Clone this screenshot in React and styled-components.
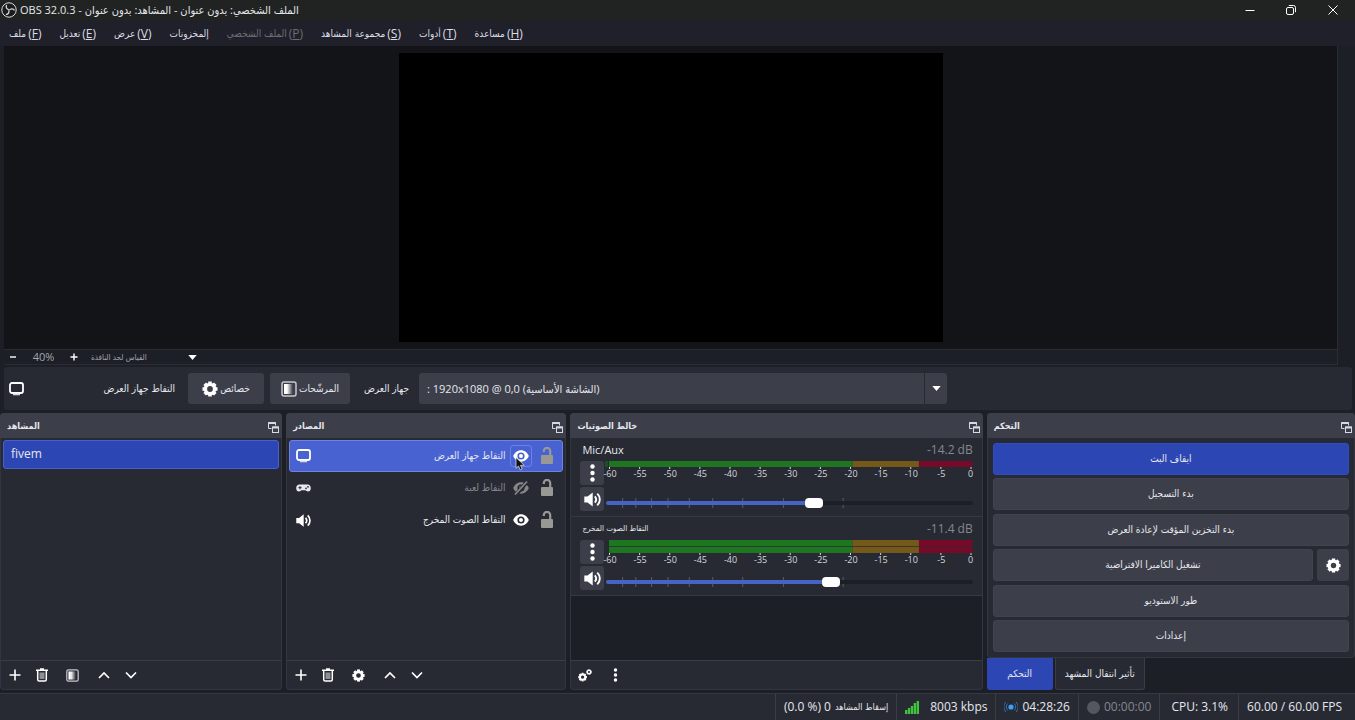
import { Fragment, useState } from "react";
import styled, { createGlobalStyle, css } from "styled-components";

const latin = `"Open Sans", "Noto Sans", "DejaVu Sans Condensed", "DejaVu Sans", sans-serif`;
const arabic = `"DejaVu Sans Condensed", "DejaVu Sans", "Open Sans", sans-serif`;

const MENUS = [
  { text: "ملف", letter: "F" },
  { text: "تعديل", letter: "E" },
  { text: "عرض", letter: "V" },
  { text: "إلمخزونات" },
  { text: "الملف الشخصي", letter: "P", disabled: true },
  { text: "مجموعة المشاهد", letter: "S" },
  { text: "أدوات", letter: "T" },
  { text: "مساعدة", letter: "H" }
];

const SOURCES = [
  { name: "التقاط جهاز العرض", icon: "display", visible: true, selected: true },
  { name: "التقاط لعبة", icon: "gamepad", visible: false },
  { name: "التقاط الصوت المخرج", icon: "speaker", visible: true }
];

export default function App() {
  return (
    <Fragment>
      <GlobalStyle />
      <Window>
        <TitleBar>
          <ObsLogo />
          <Title>OBS 32.0.3 - الملف الشخصي: بدون عنوان - المشاهد: بدون عنوان</Title>
          <WindowButton aria-label="Minimize">
            <Stroke viewBox="0 0 10 10" size={10}>
              <path d="M0.5 5.5h9" />
            </Stroke>
          </WindowButton>
          <WindowButton aria-label="Restore">
            <Stroke viewBox="0 0 10 10" size={10}>
              <rect x="0.5" y="2.5" width="7" height="7" rx="1.5" />
              <path d="M2.8 0.5h4.7a2 2 0 0 1 2 2v4.7" />
            </Stroke>
          </WindowButton>
          <WindowButton aria-label="Close">
            <Stroke viewBox="0 0 10 10" size={10}>
              <path d="M0.5 0.5l9 9M9.5 0.5l-9 9" />
            </Stroke>
          </WindowButton>
        </TitleBar>

        <MenuBar>
          {MENUS.map((menu) => (
            <MenuItem key={menu.text} disabled={menu.disabled}>
              <Ar>{menu.text}</Ar>
              {menu.letter && (
                <span>
                  (<u>{menu.letter}</u>)
                </span>
              )}
            </MenuItem>
          ))}
        </MenuBar>

        <Preview>
          <Stage>
            <Canvas />
          </Stage>
          <ScrollColumn />
        </Preview>
        <ZoomBar>
          <ZoomButton aria-label="Zoom out">
            <Stroke viewBox="0 0 8 8" size={8}>
              <path d="M1 4h6" strokeWidth="1.4" />
            </Stroke>
          </ZoomButton>
          <ZoomValue>40%</ZoomValue>
          <ZoomButton aria-label="Zoom in">
            <Stroke viewBox="0 0 8 8" size={8}>
              <path d="M0.5 4h7M4 0.5v7" strokeWidth="1.4" />
            </Stroke>
          </ZoomButton>
          <ScaleBox>
            <ScaleSelect aria-label="Preview scaling">
              <option>القياس لحد النافذة</option>
            </ScaleSelect>
            <Caret />
          </ScaleBox>
        </ZoomBar>

        <SourceBar>
          <DisplayIcon />
          <SourceName>التقاط جهاز العرض</SourceName>
          <BarButton>
            <GearIcon size={16} />
            <Ar>خصائص</Ar>
          </BarButton>
          <BarButton>
            <FilterIcon size={16} />
            <Ar>المرشّحات</Ar>
          </BarButton>
          <DeviceLabel htmlFor="device">جهاز العرض</DeviceLabel>
          <DeviceBox>
            <DeviceSelect id="device">
              <option>: 1920x1080 @ 0,0 (الشاشة الأساسية)</option>
            </DeviceSelect>
            <CaretCell>
              <Caret />
            </CaretCell>
          </DeviceBox>
        </SourceBar>

        <Docks>
          <Dock title="المشاهد">
            <ListBody>
              <SceneItem>fivem</SceneItem>
            </ListBody>
            <DockTools middle={<FilterIcon size={13} />} />
          </Dock>

          <Dock title="المصادر">
            <ListBody>
              {SOURCES.map((source) => (
                <SourceItem key={source.name} source={source} />
              ))}
            </ListBody>
            <DockTools middle={<GearIcon size={13} />} />
          </Dock>

          <Dock title="خالط الصوتيات">
            <MixerBody>
              <Channel name="Mic/Aux" db="-14.2 dB" value={57} />
              <Channel name="التقاط الصوت المخرج" rtl stereo db="-11.4 dB" value={62} />
            </MixerBody>
            <Tools>
              <ToolButton aria-label="Advanced audio">
                <GearsIcon />
              </ToolButton>
              <ToolGap />
              <ToolButton aria-label="Mixer menu">
                <DotsIcon height={14} />
              </ToolButton>
            </Tools>
          </Dock>

          <ControlColumn>
            <Dock title="التحكم">
              <Controls>
                <ControlButton primary>ايقاف البث</ControlButton>
                <ControlButton>بدء التسجيل</ControlButton>
                <ControlButton>بدء التخزين المؤقت لإعادة العرض</ControlButton>
                <ControlRow>
                  <ControlButton>تشغيل الكاميرا الافتراضية</ControlButton>
                  <ControlIconButton aria-label="Virtual camera settings">
                    <GearIcon size={15} />
                  </ControlIconButton>
                </ControlRow>
                <ControlButton>طور الاستوديو</ControlButton>
                <ControlButton>إعدادات</ControlButton>
              </Controls>
            </Dock>
            <Tabs>
              <Tab active>التحكم</Tab>
              <Tab>تأثير انتقال المشهد</Tab>
            </Tabs>
          </ControlColumn>
        </Docks>

        <StatusBar>
          <StatusCell>
            (0.0 %) 0 <SmallAr>إسقاط المشاهد</SmallAr>
          </StatusCell>
          <StatusCell wide>
            <SignalIcon />
            8003 kbps
          </StatusCell>
          <StatusCell>
            <LiveIcon />
            04:28:26
          </StatusCell>
          <StatusCell muted>
            <RecordDot />
            00:00:00
          </StatusCell>
          <StatusCell roomy>CPU: 3.1%</StatusCell>
          <StatusCell last>60.00 / 60.00 FPS</StatusCell>
        </StatusBar>
      </Window>
    </Fragment>
  );
}

// Docks
const Dock = ({ title, children }) => (
  <DockFrame>
    <DockHeader>
      <DockTitle>{title}</DockTitle>
      <FloatButton aria-label="Float dock">
        <svg width="11" height="11" viewBox="0 0 11 11" fill="none" stroke="#d8dae2">
          <path d="M3.5 6.5h-3v-6h7v3" />
          <path d="M0.5 1h7" strokeWidth="2" />
          <rect x="4.5" y="5" width="6" height="5.5" />
          <path d="M4.5 5.5h6" strokeWidth="2" />
        </svg>
      </FloatButton>
    </DockHeader>
    {children}
  </DockFrame>
);

const DockTools = ({ middle }) => (
  <Tools>
    <ToolButton aria-label="Add">
      <Stroke viewBox="0 0 12 12" size={12}>
        <path d="M6 0.5v11M0.5 6h11" strokeWidth="1.6" />
      </Stroke>
    </ToolButton>
    <ToolButton aria-label="Remove">
      <TrashIcon />
    </ToolButton>
    <ToolGap />
    <ToolButton aria-label="Options">{middle}</ToolButton>
    <ToolGap />
    <ToolButton aria-label="Move up">
      <Stroke viewBox="0 0 12 8" size={12}>
        <path d="M1 7l5-5 5 5" strokeWidth="1.7" />
      </Stroke>
    </ToolButton>
    <ToolButton aria-label="Move down">
      <Stroke viewBox="0 0 12 8" size={12}>
        <path d="M1 1.5l5 5 5-5" strokeWidth="1.7" />
      </Stroke>
    </ToolButton>
  </Tools>
);

const SourceItem = ({ source }) => (
  <SourceRow selected={source.selected}>
    {source.icon === "display" && <DisplayIcon />}
    {source.icon === "gamepad" && <GamepadIcon />}
    {source.icon === "speaker" && <SpeakerIcon size={15} />}
    <SourceText dim={!source.visible}>{source.name}</SourceText>
    <EyeButton aria-label="Visibility" hovered={source.selected}>
      <EyeIcon off={!source.visible} />
      {source.selected && <Cursor />}
    </EyeButton>
    <LockButton aria-label="Lock">
      <LockIcon />
    </LockButton>
  </SourceRow>
);

// Mixer
const Channel = ({ name, rtl, stereo, db, value }) => {
  const [volume, setVolume] = useState(value);
  return (
    <ChannelBox>
      <ChannelHead>
        {rtl ? <ChannelAr>{name}</ChannelAr> : <span>{name}</span>}
        <Db>{db}</Db>
      </ChannelHead>
      <ChannelGrid>
        <SquareButton aria-label="Channel menu">
          <DotsIcon height={18} />
        </SquareButton>
        <Meter stereo={stereo} />
        <SquareButton aria-label="Mute">
          <SpeakerIcon size={17} />
        </SquareButton>
        <SliderBox>
          <SliderTicks />
          <Slider
            type="range"
            aria-label={name}
            value={volume}
            onChange={(e) => setVolume(Number(e.target.value))}
            style={{ "--fill": `${volume}%` }}
          />
        </SliderBox>
      </ChannelGrid>
    </ChannelBox>
  );
};

const LEVELS = [-60, -55, -50, -45, -40, -35, -30, -25, -20, -15, -10, -5, 0];

const Meter = ({ stereo }) => {
  const height = stereo ? 13 : 6;
  return (
    <MeterSvg>
      <rect x="0" y="0" width="67%" height={height} fill="#1f7621" />
      <rect x="67%" y="0" width="18.5%" height={height} fill="#74591a" />
      <rect x="85.3%" y="0" width="14.7%" height={height} fill="#760a28" />
      {stereo && <rect x="0" y="6" width="100%" height="1" fill="#272a33" opacity="0.7" />}
      {!stereo && <rect x="-4" y="0" width="3" height="6" fill="#1c4f25" />}
      {LEVELS.map((level) => {
        const x = `${((level + 60) / 60) * 99.5}%`;
        return (
          <Fragment key={level}>
            <rect x={x} y={height} width="1" height="2" fill="#d5d7de" />
            <text x={x} y={height + 10} dx={level ? 1 : 0} textAnchor="middle">
              {level}
            </text>
          </Fragment>
        );
      })}
    </MeterSvg>
  );
};

const SliderTicks = () => (
  <TickSvg>
    {[4.4, 8, 12.3, 16.8, 22.6, 29, 37.2, 48.3, 64.6].map((x) => (
      <rect key={x} x={`${x}%`} y="0" width="1" height="10" />
    ))}
  </TickSvg>
);

// Icons
const ObsLogo = () => (
  <svg width="16" height="16" viewBox="0 0 16 16" fill="none" stroke="#dcdcdc">
    <circle cx="8" cy="8" r="7.2" fill="#1a1b1d" />
    <path d="M5.6 3c-1 2.200 0 4.300 2.300 4.600" strokeWidth="1.300" />
    <path d="M5.6 3c-1 2.200 0 4.300 2.300 4.600" strokeWidth="1.300" transform="rotate(120 8 8)" />
    <path d="M5.6 3c-1 2.200 0 4.300 2.300 4.600" strokeWidth="1.300" transform="rotate(240 8 8)" />
  </svg>
);

const DisplayIcon = () => (
  <svg width="15" height="14" viewBox="0 0 15 14" fill="none" stroke="#fff">
    <rect x="1" y="1" width="13" height="10" rx="2" strokeWidth="1.8" />
    <path d="M4 12.500h7" stroke="#d5d8e6" strokeWidth="1.600" />
  </svg>
);

const GamepadIcon = () => (
  <svg width="15" height="14" viewBox="0 0 15 14">
    <path
      d="M3.600 3.500h7.800c2.200 0 3.400 1.700 3.400 3.700S13.700 10.500 12 10.500c-1.300 0-1.800-1.300-2.700-1.300H5.700c-.9 0-1.400 1.300-2.700 1.300-1.700 0-2.800-1.300-2.800-3.300s1.200-3.700 3.400-3.700z"
      fill="#e8e9ee"
    />
    <path d="M2.400 6.700h3.200M4 5.100v3.200" stroke="#272a33" />
    <circle cx="10" cy="7.300" r="0.900" fill="#272a33" />
    <circle cx="12" cy="5.800" r="0.900" fill="#272a33" />
  </svg>
);

const SpeakerIcon = ({ size }) => (
  <svg width={size} height={size} viewBox="0 0 16 16" fill="none" stroke="#fff">
    <path d="M0.300 5.200h3L8.200 1.300v13.400L3.300 10.800h-3z" fill="#fff" stroke="none" />
    <path d="M10.200 5c1.400 1.700 1.400 4.300 0 6M12.500 2.500c3.200 3.100 3.200 7.900 0 11" strokeWidth="1.800" />
  </svg>
);

const EyeIcon = ({ off }) => (
  <svg width="16" height="16" viewBox="0 0 16 16">
    <path
      d="M8 2.300C4.500 2.300 1.500 4.600 0.200 8c1.300 3.400 4.300 5.700 7.800 5.700s6.500-2.300 7.800-5.700C14.500 4.600 11.500 2.300 8 2.300zm0 9.300a3.600 3.600 0 1 1 0-7.200 3.600 3.600 0 0 1 0 7.200zM8 6a2 2 0 1 0 0 4 2 2 0 0 0 0-4z"
      fill={off ? "#85878b" : "#fff"}
    />
    {off && <path d="M2.500 15l11.500-13" stroke="#272a33" strokeWidth="4" />}
    {off && <path d="M2 14.500L14 1.500" stroke="#85878b" strokeWidth="1.800" />}
  </svg>
);

const LockIcon = () => (
  <svg width="14" height="18" viewBox="0 0 14 18">
    <rect x="1" y="8" width="12" height="9" rx="1" fill="#989895" />
    <path d="M3.800 5V4a3.200 3.200 0 0 1 6.400 0v4" fill="none" stroke="#989895" strokeWidth="2.200" />
  </svg>
);

const GearShape = ({ color = "#fff" }) => (
  <g fill="none" stroke={color}>
    <circle cx="8" cy="8" r="4.600" strokeWidth="3.400" />
    {[0, 45, 90, 135, 180, 225, 270, 315].map((angle) => (
      <path key={angle} d="M8 2.500V0.500" strokeWidth="3.600" transform={`rotate(${angle} 8 8)`} />
    ))}
  </g>
);

const GearIcon = ({ size }) => (
  <svg width={size} height={size} viewBox="0 0 16 16">
    <GearShape />
  </svg>
);

const GearsIcon = () => (
  <svg width="14" height="14" viewBox="0 0 28 28">
    <g transform="translate(0 9) scale(1.150)">
      <GearShape />
    </g>
    <g transform="translate(16 2) scale(0.750)">
      <GearShape />
    </g>
  </svg>
);

const FilterIcon = ({ size }) => (
  <svg width={size} height={size} viewBox="0 0 16 16">
    <defs>
      <linearGradient id="fade">
        <stop offset="0" stopColor="#fff" />
        <stop offset="1" stopColor="#33363f" />
      </linearGradient>
    </defs>
    <rect x="1" y="1" width="14" height="14" rx="2" fill="none" stroke="#c6c8ce" strokeWidth="1.500" />
    <rect x="3" y="3" width="3" height="10" fill="#fff" />
    <rect x="6" y="3" width="6" height="10" fill="url(#fade)" />
  </svg>
);

const TrashIcon = () => (
  <svg width="12" height="14" viewBox="0 0 12 14" fill="none" stroke="#fff">
    <path d="M0 2.200h12M4 1h4" strokeWidth="1.500" />
    <path d="M1.700 3v8.500a1.500 1.500 0 0 0 1.500 1.500h5.600a1.500 1.500 0 0 0 1.500-1.500V3" strokeWidth="1.500" />
    <rect x="4" y="5" width="4" height="5.500" fill="#8d8f95" stroke="#8d8f95" />
  </svg>
);

const DotsIcon = ({ height }) => (
  <svg width="5" height={height} viewBox="0 0 5 18">
    <circle cx="2.500" cy="2.500" r="2.200" fill="#fff" />
    <circle cx="2.500" cy="9" r="2.200" fill="#fff" />
    <circle cx="2.500" cy="15.500" r="2.200" fill="#fff" />
  </svg>
);

const Caret = () => (
  <CaretSvg width="9" height="5" viewBox="0 0 9 5">
    <path d="M0.300 0h8.400L4.500 5z" fill="#fff" />
  </CaretSvg>
);

const SignalIcon = () => (
  <svg width="14" height="13" viewBox="0 0 14 13" fill="#3fc43c">
    <rect x="0" y="9" width="2.400" height="4" />
    <rect x="2.900" y="7" width="2.400" height="6" />
    <rect x="5.800" y="5" width="2.400" height="8" />
    <rect x="8.700" y="2" width="2.400" height="11" />
    <rect x="11.600" y="0" width="2.400" height="13" />
  </svg>
);

const LiveIcon = () => (
  <svg width="14" height="12" viewBox="0 0 14 12" fill="none" stroke="#2f6fb0">
    <circle cx="7" cy="6" r="2.600" fill="#41a0f2" stroke="none" />
    <path d="M3.800 2.500a5 5 0 0 0 0 7M10.200 2.500a5 5 0 0 1 0 7M1.800 1a7.500 7.500 0 0 0 0 10M12.200 1a7.500 7.500 0 0 1 0 10" />
  </svg>
);

const Cursor = () => (
  <CursorSvg width="10" height="14" viewBox="0 0 10 14">
    <path d="M1 0.500v10.800l2.500-2.300 1.700 3.900 2-.9-1.700-3.700h3.700z" fill="#111" stroke="#e8e8e8" strokeWidth="0.700" />
  </CursorSvg>
);

const GlobalStyle = createGlobalStyle`
  * {
    box-sizing: border-box;
  }
  body {
    margin: 0;
    background: #1d1f27;
    color: #e6e7ec;
    font: 12px/16px ${latin};
  }
  button,
  select,
  input {
    margin: 0;
    padding: 0;
    border: 0;
    background: none;
    color: inherit;
    font: inherit;
  }
  svg {
    flex: none;
    display: block;
  }
`;

const Window = styled.div`
  display: flex;
  flex-direction: column;
  min-height: 100vh;
`;

const Ar = styled.span`
  font-family: ${arabic};
  font-size: 10px;
`;

const SmallAr = styled(Ar)`
  font-size: 9px;
`;

const Stroke = styled.svg.attrs((p) => ({ width: p.size, fill: "none", stroke: "#fff" }))``;

const TitleBar = styled.header`
  display: flex;
  align-items: center;
  height: 21px;
  padding: 0 1px 1px;
  background: #202322;
`;

const Title = styled.div`
  flex: 1;
  padding-left: 3px;
  font-size: 11px;
  font-family: "Open Sans", "DejaVu Sans Condensed", sans-serif;
`;

const WindowButton = styled.button`
  display: grid;
  place-items: center;
  width: 41px;
  height: 20px;

  &:last-child {
    width: 43px;
  }
`;

const MenuBar = styled.nav`
  display: flex;
  gap: 18px;
  height: 25px;
  padding: 0 9px;
  background: #1f2029;
`;

const MenuItem = styled.button`
  display: flex;
  align-items: center;
  gap: 2px;
  color: ${(p) => (p.disabled ? "#6d6e75" : "#dcdde3")};
`;

const Preview = styled.main`
  flex: 1;
  display: flex;
  min-height: 240px;
  padding-left: 4px;
`;

const Stage = styled.div`
  flex: 1;
  display: flex;
  justify-content: center;
  padding: 7px 0;
  background: #131418;
`;

const Canvas = styled.div`
  aspect-ratio: 544 / 289;
  background: #000;
`;

const ScrollColumn = styled.div`
  width: 18px;
  border-left: 1px solid #2a2c35;
  background: #1d1f27;
`;

const ZoomBar = styled.div`
  display: flex;
  align-items: center;
  height: 16px;
  margin: 0 17px 0 4px;
  border: 1px solid #2a2c35;
  border-left: 0;
  color: #a2a4ab;
  font-size: 11px;
`;

const ZoomButton = styled.button`
  display: grid;
  place-items: center;
  width: 18px;
`;

const ZoomValue = styled.span`
  width: 43px;
  text-align: center;
`;

const ScaleBox = styled.div`
  display: grid;
  align-items: center;
  width: 106px;
  margin-left: 8px;
`;

const CaretSvg = styled.svg`
  grid-area: 1 / 1;
  justify-self: end;
  pointer-events: none;
`;

const ScaleSelect = styled.select`
  grid-area: 1 / 1;
  appearance: none;
  height: 13px;
  font: 8px/13px ${arabic};
`;

const SourceBar = styled.section`
  display: flex;
  align-items: center;
  height: 43px;
  margin: 2px 3px 3px 4px;
  padding: 0 5px;
  border-radius: 3px;
  background: #272a33;
`;

const SourceName = styled.span`
  width: 151px;
  text-align: right;
  font: 10px/16px ${arabic};
`;

const BarButton = styled.button`
  display: flex;
  align-items: center;
  justify-content: center;
  gap: 2px;
  min-width: 76px;
  height: 31px;
  margin-left: 6px;
  padding: 0 11px;
  border-radius: 3px;
  background: #3c3f4a;

  ${SourceName} + & {
    margin-left: 13px;
  }
`;

const DeviceLabel = styled.label`
  margin: 0 10px 0 14px;
  font: 10px/16px ${arabic};
`;

const DeviceBox = styled.div`
  display: grid;
  width: 39vw;
  height: 31px;
  border-radius: 3px;
  background: #3c3f4a;
`;

const DeviceSelect = styled.select`
  grid-area: 1 / 1;
  appearance: none;
  padding-left: 8px;
  font-size: 11px;
  font-family: "Open Sans", "DejaVu Sans Condensed", sans-serif;
`;

const CaretCell = styled.span`
  grid-area: 1 / 1;
  justify-self: end;
  display: flex;
  align-items: center;
  justify-content: center;
  width: 23px;
  border-left: 1px solid #272a33;
  pointer-events: none;
`;

const Docks = styled.section`
  display: grid;
  grid-template-columns: 282fr 280fr 412fr 368fr;
  gap: 4px;
  height: 277px;
`;

const DockFrame = styled.section`
  display: flex;
  flex-direction: column;
  flex: 1;
  border: 1px solid #33363f;
  border-top: 0;
  border-radius: 4px;
  background: #272a33;
`;

const DockHeader = styled.header`
  display: flex;
  align-items: center;
  justify-content: space-between;
  height: 25px;
  margin: 0 -1px;
  padding: 0 3px 0 7px;
  border-radius: 4px 4px 0 0;
  background: #3c3f4a;
`;

const DockTitle = styled.h2`
  margin: 0;
  font: bold 9px/16px ${arabic};
`;

const FloatButton = styled.button`
  padding-top: 4px;
`;

const ListBody = styled.ul`
  flex: 1;
  margin: 0;
  padding: 2px;
  list-style: none;
`;

const SceneItem = styled.li`
  height: 29px;
  padding: 5px 7px;
  border: 1px solid #4660d0;
  border-radius: 3px;
  background: #2c46b3;
`;

const SourceRow = styled.li`
  display: flex;
  align-items: center;
  height: 32px;
  padding: 0 8px 0 6px;
  border: 1px solid transparent;
  border-radius: 3px;

  ${(p) =>
    p.selected &&
    css`
      border-color: #6f83dd;
      background: #4962d2;
    `}
`;

const SourceText = styled.span`
  flex: 1;
  padding-right: 5px;
  text-align: right;
  color: ${(p) => (p.dim ? "#85878e" : "#e6e7ec")};
  font: 10px/16px ${arabic};
`;

const EyeButton = styled.button`
  position: relative;
  display: grid;
  place-items: center;
  width: 22px;
  height: 22px;
  border: 1px solid ${(p) => (p.hovered ? "#6b80e2" : "transparent")};
  border-radius: 3px;
`;

const CursorSvg = styled.svg`
  position: absolute;
  left: 4px;
  top: 11px;
`;

const LockButton = styled.button`
  margin-left: 8px;
`;

const Tools = styled.footer`
  display: flex;
  align-items: center;
  height: 29px;
  border-top: 1px solid #3a3d46;
`;

const ToolButton = styled.button`
  display: grid;
  place-items: center;
  width: 27px;
  height: 26px;
`;

const ToolGap = styled.span`
  width: 4px;
`;

const MixerBody = styled.div`
  flex: 1;
  background: #1d1f27;
`;

const ChannelBox = styled.div`
  height: 79px;
  padding: 4px 9px 0;
  border-bottom: 1px solid #363943;
  background: #272a33;
`;

const ChannelHead = styled.div`
  display: flex;
  align-items: center;
  justify-content: space-between;
  height: 16px;
  margin-bottom: 3px;
  padding-left: 2px;
  font-size: 11px;
`;

const ChannelAr = styled.span`
  font: 8px/16px ${arabic};
`;

const Db = styled.span`
  color: #85878f;
  font-size: 12px;
`;

const ChannelGrid = styled.div`
  display: grid;
  grid-template-columns: 24px 1fr;
  grid-template-rows: 24px 24px;
  gap: 2px;
`;

const SquareButton = styled.button`
  display: grid;
  place-items: center;
  border-radius: 3px;
  background: #3c3f4a;
`;

const MeterSvg = styled.svg`
  width: calc(100% - 3px);
  height: 24px;
  margin-left: 3px;
  overflow: visible;

  text {
    fill: #d5d7de;
    font: 9px ${latin};
  }
`;

const SliderBox = styled.div`
  display: grid;
  align-items: center;
  padding-top: 8px;
`;

const TickSvg = styled.svg`
  grid-area: 1 / 1;
  width: 100%;
  height: 10px;
  fill: #5b5e68;
`;

const Slider = styled.input`
  grid-area: 1 / 1;
  appearance: none;
  width: 100%;
  height: 10px;

  &::-webkit-slider-runnable-track {
    height: 4px;
    border-radius: 2px;
    background: linear-gradient(to right, #4564c4 var(--fill), #1d1f27 var(--fill));
  }
  &::-webkit-slider-thumb {
    appearance: none;
    width: 18px;
    height: 10px;
    margin-top: -3px;
    border-radius: 4px;
    background: #fff;
  }
`;

const ControlColumn = styled.div`
  display: flex;
  flex-direction: column;
`;

const Controls = styled.div`
  flex: 1;
  display: flex;
  flex-direction: column;
  justify-content: space-between;
  padding: 5px;
`;

const ControlButton = styled.button`
  flex: none;
  height: 32px;
  border: 1px solid ${(p) => (p.primary ? "#2f4cc0" : "#41444f")};
  border-radius: 3px;
  background: ${(p) => (p.primary ? "#2c46b3" : "#3c3f4a")};
  font: 10px/16px ${arabic};
`;

const ControlRow = styled.div`
  display: flex;
  gap: 4px;

  ${ControlButton} {
    flex: 1;
  }
`;

const ControlIconButton = styled.button`
  display: grid;
  place-items: center;
  width: 32px;
  height: 32px;
  border-radius: 3px;
  background: #3c3f4a;
`;

const Tabs = styled.div`
  display: flex;
  gap: 2px;
  height: 32px;
`;

const Tab = styled.button`
  min-width: 66px;
  padding: 0 9px;
  border: 1px solid ${(p) => (p.active ? "#2c46b3" : "#3a3d46")};
  border-top: 0;
  border-radius: 0 0 3px 3px;
  background: ${(p) => (p.active ? "#2c46b3" : "#272a33")};
  font: 10px/16px ${arabic};
`;

const StatusBar = styled.footer`
  display: flex;
  justify-content: flex-end;
  height: 27px;
  margin-top: 3px;
  border-top: 1px solid #363943;
  background: #272a33;
`;

const StatusCell = styled.div`
  display: flex;
  align-items: center;
  gap: ${(p) => (p.wide ? 11 : 4)}px;
  padding: 0 ${(p) => (p.last ? 13 : p.roomy ? 10 : 8)}px 0 ${(p) => (p.roomy ? 11 : 8)}px;
  border-left: 1px solid #3a3d46;
  color: ${(p) => (p.muted ? "#85878e" : "#e6e7ec")};
`;

const RecordDot = styled.span`
  width: 13px;
  height: 13px;
  border-radius: 50%;
  background: #55575e;
`;
